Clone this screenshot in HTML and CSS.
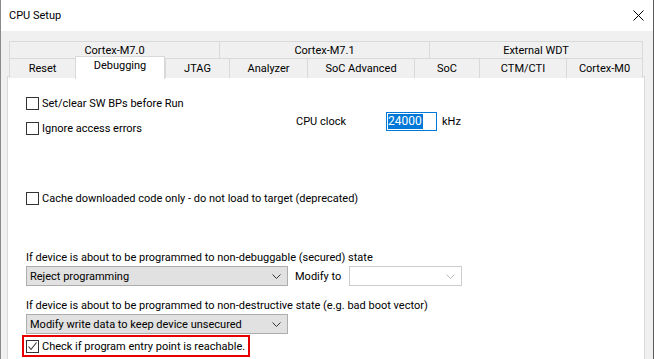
FILE: index.html
```html
<!DOCTYPE html>
<html lang="en">
<head>
<meta charset="UTF-8" />
<title>CPU Setup</title>
<link rel="stylesheet" href="styles.css">
</head>
<body>

<div class="window">
  <div class="titlebar">
    <span class="title">CPU Setup</span>
    <svg class="close" width="11" height="11" viewBox="0 0 11 11">
      <path d="M0.5 0.5 L10.5 10.5 M10.5 0.5 L0.5 10.5" stroke="#000" stroke-width="1" fill="none" />
    </svg>
  </div>

  <div class="client">
    <div class="tabs">
      <div class="tab-row row-top">
        <div class="tab">Cortex-M7.0</div>
        <div class="tab">Cortex-M7.1</div>
        <div class="tab">External WDT</div>
      </div>
      <div class="tab-row row-bottom">
        <div class="tab">Reset</div>
        <div class="tab active">Debugging</div>
        <div class="tab">JTAG</div>
        <div class="tab">Analyzer</div>
        <div class="tab">SoC Advanced</div>
        <div class="tab">SoC</div>
        <div class="tab">CTM/CTI</div>
        <div class="tab">Cortex-M0</div>
      </div>
    </div>

    <div class="panel">
      <div class="top-section">
        <div class="left-col">
          <div class="check-row"><span class="box"></span>Set/clear SW BPs before Run</div>
          <div class="check-row"><span class="box"></span>Ignore access errors</div>
        </div>
        <div class="right-col">
          <span class="clock-label">CPU clock</span>
          <span class="clock-input"><span class="selected-text">24000</span></span>
          <span class="unit">kHz</span>
        </div>
      </div>

      <div class="check-row cache-row"><span class="box"></span>Cache downloaded code only - do not load to target (deprecated)</div>

      <div class="field-label first">If device is about to be programmed to non-debuggable (secured) state</div>
      <div class="select-row">
        <div class="select">
          <span class="select-text">Reject programming</span>
          <svg class="chevron" width="9" height="5" viewBox="0 0 9 5"><path d="M0.5 0.5 L4.5 4.5 L8.5 0.5" stroke="#333" fill="none" /></svg>
        </div>
        <span class="modify-label">Modify to</span>
        <div class="select disabled">
          <span class="select-text"></span>
          <svg class="chevron" width="9" height="5" viewBox="0 0 9 5"><path d="M0.5 0.5 L4.5 4.5 L8.5 0.5" stroke="#bcbcbc" fill="none" /></svg>
        </div>
      </div>

      <div class="field-label">If device is about to be programmed to non-destructive state (e.g. bad boot vector)</div>
      <div class="select-row">
        <div class="select">
          <span class="select-text">Modify write data to keep device unsecured</span>
          <svg class="chevron" width="9" height="5" viewBox="0 0 9 5"><path d="M0.5 0.5 L4.5 4.5 L8.5 0.5" stroke="#333" fill="none" /></svg>
        </div>
      </div>

      <div class="highlight">
        <div class="check-row">
          <span class="box">
            <svg width="11" height="11" viewBox="0 0 11 11"><path d="M1.5 5.5 L4 8.5 L9.5 1.5" stroke="#333" stroke-width="1.1" fill="none" /></svg>
          </span>
          Check if program entry point is reachable.
        </div>
      </div>
    </div>
  </div>
</div>

</body>
</html>
```

FILE: styles.css
```css
body {
  margin: 0;
  font-family: Roboto, 'Liberation Sans', sans-serif;
  font-size: 11px;
  color: #000;
  background: #fff;
  overflow: hidden;
}

.window {
  width: 654px;
  height: 359px;
  box-sizing: border-box;
  border-left: 1px solid #8a8a8a;
  border-right: 1px solid #5a5a5a;
  display: flex;
  flex-direction: column;
}

.titlebar {
  height: 31px;
  background: #fff;
  display: flex;
  align-items: center;
  justify-content: space-between;
  padding: 0 9px 0 8px;
  flex-shrink: 0;
}

.title {
  font-size: 11px;
}

.close {
  display: block;
}

.client {
  flex: 1;
  background: #f0f0f0;
  padding-top: 10px;
  overflow: hidden;
}

/* tabs */
.tabs {
  margin-left: 8px;
}

.tab-row {
  display: grid;
}

.row-top {
  grid-template-columns: 210px 210px 214px;
  height: 17px;
}

.row-bottom {
  grid-template-columns: 66px 90px 64px 78px 107px 65px 87px 77px;
  height: 18px;
}

.tab {
  box-sizing: border-box;
  border-top: 1px solid #d9d9d9;
  border-left: 1px solid #d9d9d9;
  background: #f0f0f0;
  text-align: center;
  line-height: 17px;
  white-space: nowrap;
}

.tab:last-child {
  border-right: 1px solid #d9d9d9;
}

.row-bottom .tab {
  line-height: 19px;
}

.tab.active {
  position: relative;
  z-index: 1;
  background: #fff;
  margin-top: -2px;
  margin-bottom: -1px;
  border-right: 1px solid #d9d9d9;
  line-height: 18px;
}

/* panel */
.panel {
  margin-left: 6px;
  width: 638px;
  height: 300px;
  box-sizing: border-box;
  background: #fff;
  border: 1px solid #d9d9d9;
  padding: 18px 0 0 18px;
}

.top-section {
  display: flex;
}

.left-col {
  width: 270px;
  display: flex;
  flex-direction: column;
  gap: 9px;
}

.check-row {
  display: flex;
  align-items: center;
  gap: 3px;
  height: 16px;
  white-space: nowrap;
}

.box {
  width: 13px;
  height: 13px;
  box-sizing: border-box;
  border: 1px solid #333;
  background: #fff;
  flex-shrink: 0;
  display: flex;
}

.right-col {
  padding-top: 17px;
  display: flex;
  align-items: center;
  height: 19px;
}

.clock-label {
  width: 90px;
}

.clock-input {
  width: 51px;
  height: 19px;
  box-sizing: border-box;
  border: 1px solid #0078d7;
  padding: 1px 0 0 1px;
  display: flex;
}

.selected-text {
  background: #0078d7;
  color: #fff;
  height: 15px;
  line-height: 15px;
  padding-right: 1px;
  font-size: 12px;
}

.unit {
  margin-left: 5px;
}

.cache-row {
  margin-top: 54px;
}

.field-label {
  margin-top: 12px;
  height: 16px;
  line-height: 16px;
  white-space: nowrap;
}

.field-label.first {
  margin-top: 44px;
}

.select-row {
  display: flex;
  align-items: center;
}

.select {
  width: 262px;
  height: 20px;
  box-sizing: border-box;
  background: #e1e1e1;
  border: 1px solid #adadad;
  display: flex;
  align-items: center;
  justify-content: space-between;
  padding: 0 6px 0 3px;
  flex-shrink: 0;
}

.select-text {
  white-space: nowrap;
}

.select.disabled {
  width: 113px;
  background: #fff;
  border-color: #cccccc;
}

.modify-label {
  width: 54px;
  margin-left: 7px;
  white-space: nowrap;
}

.highlight {
  margin-top: 1px;
  margin-left: -4px;
  width: 228px;
  height: 22px;
  box-sizing: border-box;
  border: 2px solid #e80000;
  padding: 1px 0 0 2px;
}
```
